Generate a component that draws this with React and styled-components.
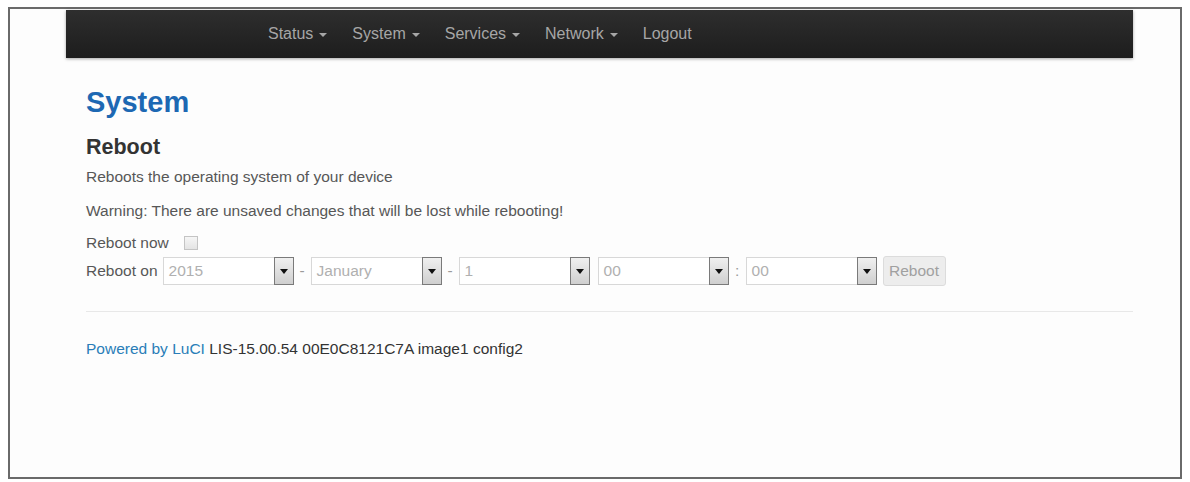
import React from 'react';
import styled, { createGlobalStyle } from 'styled-components';

const GlobalStyle = createGlobalStyle`
  html, body {
    margin: 0;
    padding: 0;
    background: #ffffff;
  }
  body {
    font-family: "Liberation Sans", Arial, sans-serif;
    font-size: 15.5px;
    color: #404040;
  }
`;

const Frame = styled.div`
  margin: 7px 8px 0 8px;
  height: 472px;
  box-sizing: border-box;
  border: 2px solid #6a6a6a;
  background: #fdfdfd;
  padding: 1px 47px 0 56px;
`;

const Navbar = styled.div`
  height: 48px;
  display: flex;
  align-items: center;
  padding-left: 202px;
  background: linear-gradient(#2e2e2e, #1d1d1d);
  box-shadow: 0 1px 3px rgba(0, 0, 0, 0.35);
`;

const NavItem = styled.span`
  display: inline-flex;
  align-items: center;
  gap: 6px;
  margin-right: 25px;
  color: #a6a6a6;
  font-size: 16px;
`;

const Caret = styled.span`
  width: 0;
  height: 0;
  border-left: 4px solid transparent;
  border-right: 4px solid transparent;
  border-top: 4px solid #a6a6a6;
  margin-top: 2px;
`;

const Content = styled.div`
  padding: 0 0 0 20px;
`;

const Title = styled.h2`
  margin: 26px 0 0 0;
  font-size: 29px;
  line-height: 36px;
  font-weight: bold;
  color: #1d68b3;
`;

const SubTitle = styled.h3`
  margin: 14px 0 0 0;
  font-size: 21.5px;
  line-height: 26px;
  font-weight: bold;
  color: #333333;
`;

const Text = styled.p`
  margin: ${(p) => p.top || 0}px 0 0 0;
  font-size: 15.5px;
  line-height: 20px;
  color: #575757;
`;

const Row = styled.div`
  display: flex;
  align-items: center;
  height: ${(p) => p.h || 30}px;
  margin-top: ${(p) => p.top || 0}px;
`;

const Label = styled.span`
  font-size: 15.5px;
  color: #575757;
  margin-right: ${(p) => p.gap || 5}px;
`;

const Checkbox = styled.span`
  width: 12px;
  height: 12px;
  border: 1px solid #c4c4c4;
  background: linear-gradient(#f6f6f6, #e4e4e4);
`;

const Select = styled.div`
  width: 131px;
  height: 28px;
  box-sizing: border-box;
  display: flex;
  border: 1px solid #d8d8d8;
  background: #ffffff;
`;

const SelectValue = styled.span`
  flex: 1;
  padding-left: 5px;
  line-height: 26px;
  font-size: 15.5px;
  color: #b0b0b0;
`;

const SelectArrow = styled.span`
  width: 18px;
  display: flex;
  align-items: center;
  justify-content: center;
  border: 1px solid #7a7a7a;
  margin: -1px -1px -1px 0;
  background: linear-gradient(#f0f0f0, #cfcfcf);

  &::after {
    content: '';
    border-left: 4px solid transparent;
    border-right: 4px solid transparent;
    border-top: 5px solid #111;
  }
`;

const Sep = styled.span`
  width: ${(p) => p.w || 17}px;
  text-align: center;
  font-size: 15.5px;
  color: #9a9a9a;
`;

const Button = styled.span`
  margin-left: 6px;
  width: 63px;
  height: 30px;
  box-sizing: border-box;
  display: inline-flex;
  align-items: center;
  justify-content: center;
  border: 1px solid #dcdcdc;
  border-radius: 3px;
  background: #ededed;
  color: #a0a0a0;
  font-size: 15.5px;
`;

const Rule = styled.div`
  margin-top: 25px;
  border-top: 1px solid #e8e8e8;
`;

const Footer = styled.div`
  margin-top: 27px;
  line-height: 20px;
  font-size: 15.5px;
  color: #333333;
`;

const Link = styled.span`
  color: #2a7db8;
`;

const menu = ['Status', 'System', 'Services', 'Network'];

const DateSelect = ({ value }) => (
  <Select>
    <SelectValue>{value}</SelectValue>
    <SelectArrow />
  </Select>
);

export default function App() {
  return (
    <>
      <GlobalStyle />
      <Frame>
        <Navbar>
          {menu.map((m) => (
            <NavItem key={m}>
              {m}
              <Caret />
            </NavItem>
          ))}
          <NavItem>Logout</NavItem>
        </Navbar>
        <Content>
          <Title>System</Title>
          <SubTitle>Reboot</SubTitle>
          <Text top={7}>Reboots the operating system of your device</Text>
          <Text top={14}>Warning: There are unsaved changes that will be lost while rebooting!</Text>
          <Row h={20} top={12}>
            <Label gap={15}>Reboot now</Label>
            <Checkbox />
          </Row>
          <Row h={30} top={3}>
            <Label gap={5}>Reboot on</Label>
            <DateSelect value="2015" />
            <Sep>-</Sep>
            <DateSelect value="January" />
            <Sep>-</Sep>
            <DateSelect value="1" />
            <Sep w={8} />
            <DateSelect value="00" />
            <Sep>:</Sep>
            <DateSelect value="00" />
            <Button>Reboot</Button>
          </Row>
          <Rule />
          <Footer>
            <Link>Powered by LuCI</Link> LIS-15.00.54 00E0C8121C7A image1 config2
          </Footer>
        </Content>
      </Frame>
    </>
  );
}
